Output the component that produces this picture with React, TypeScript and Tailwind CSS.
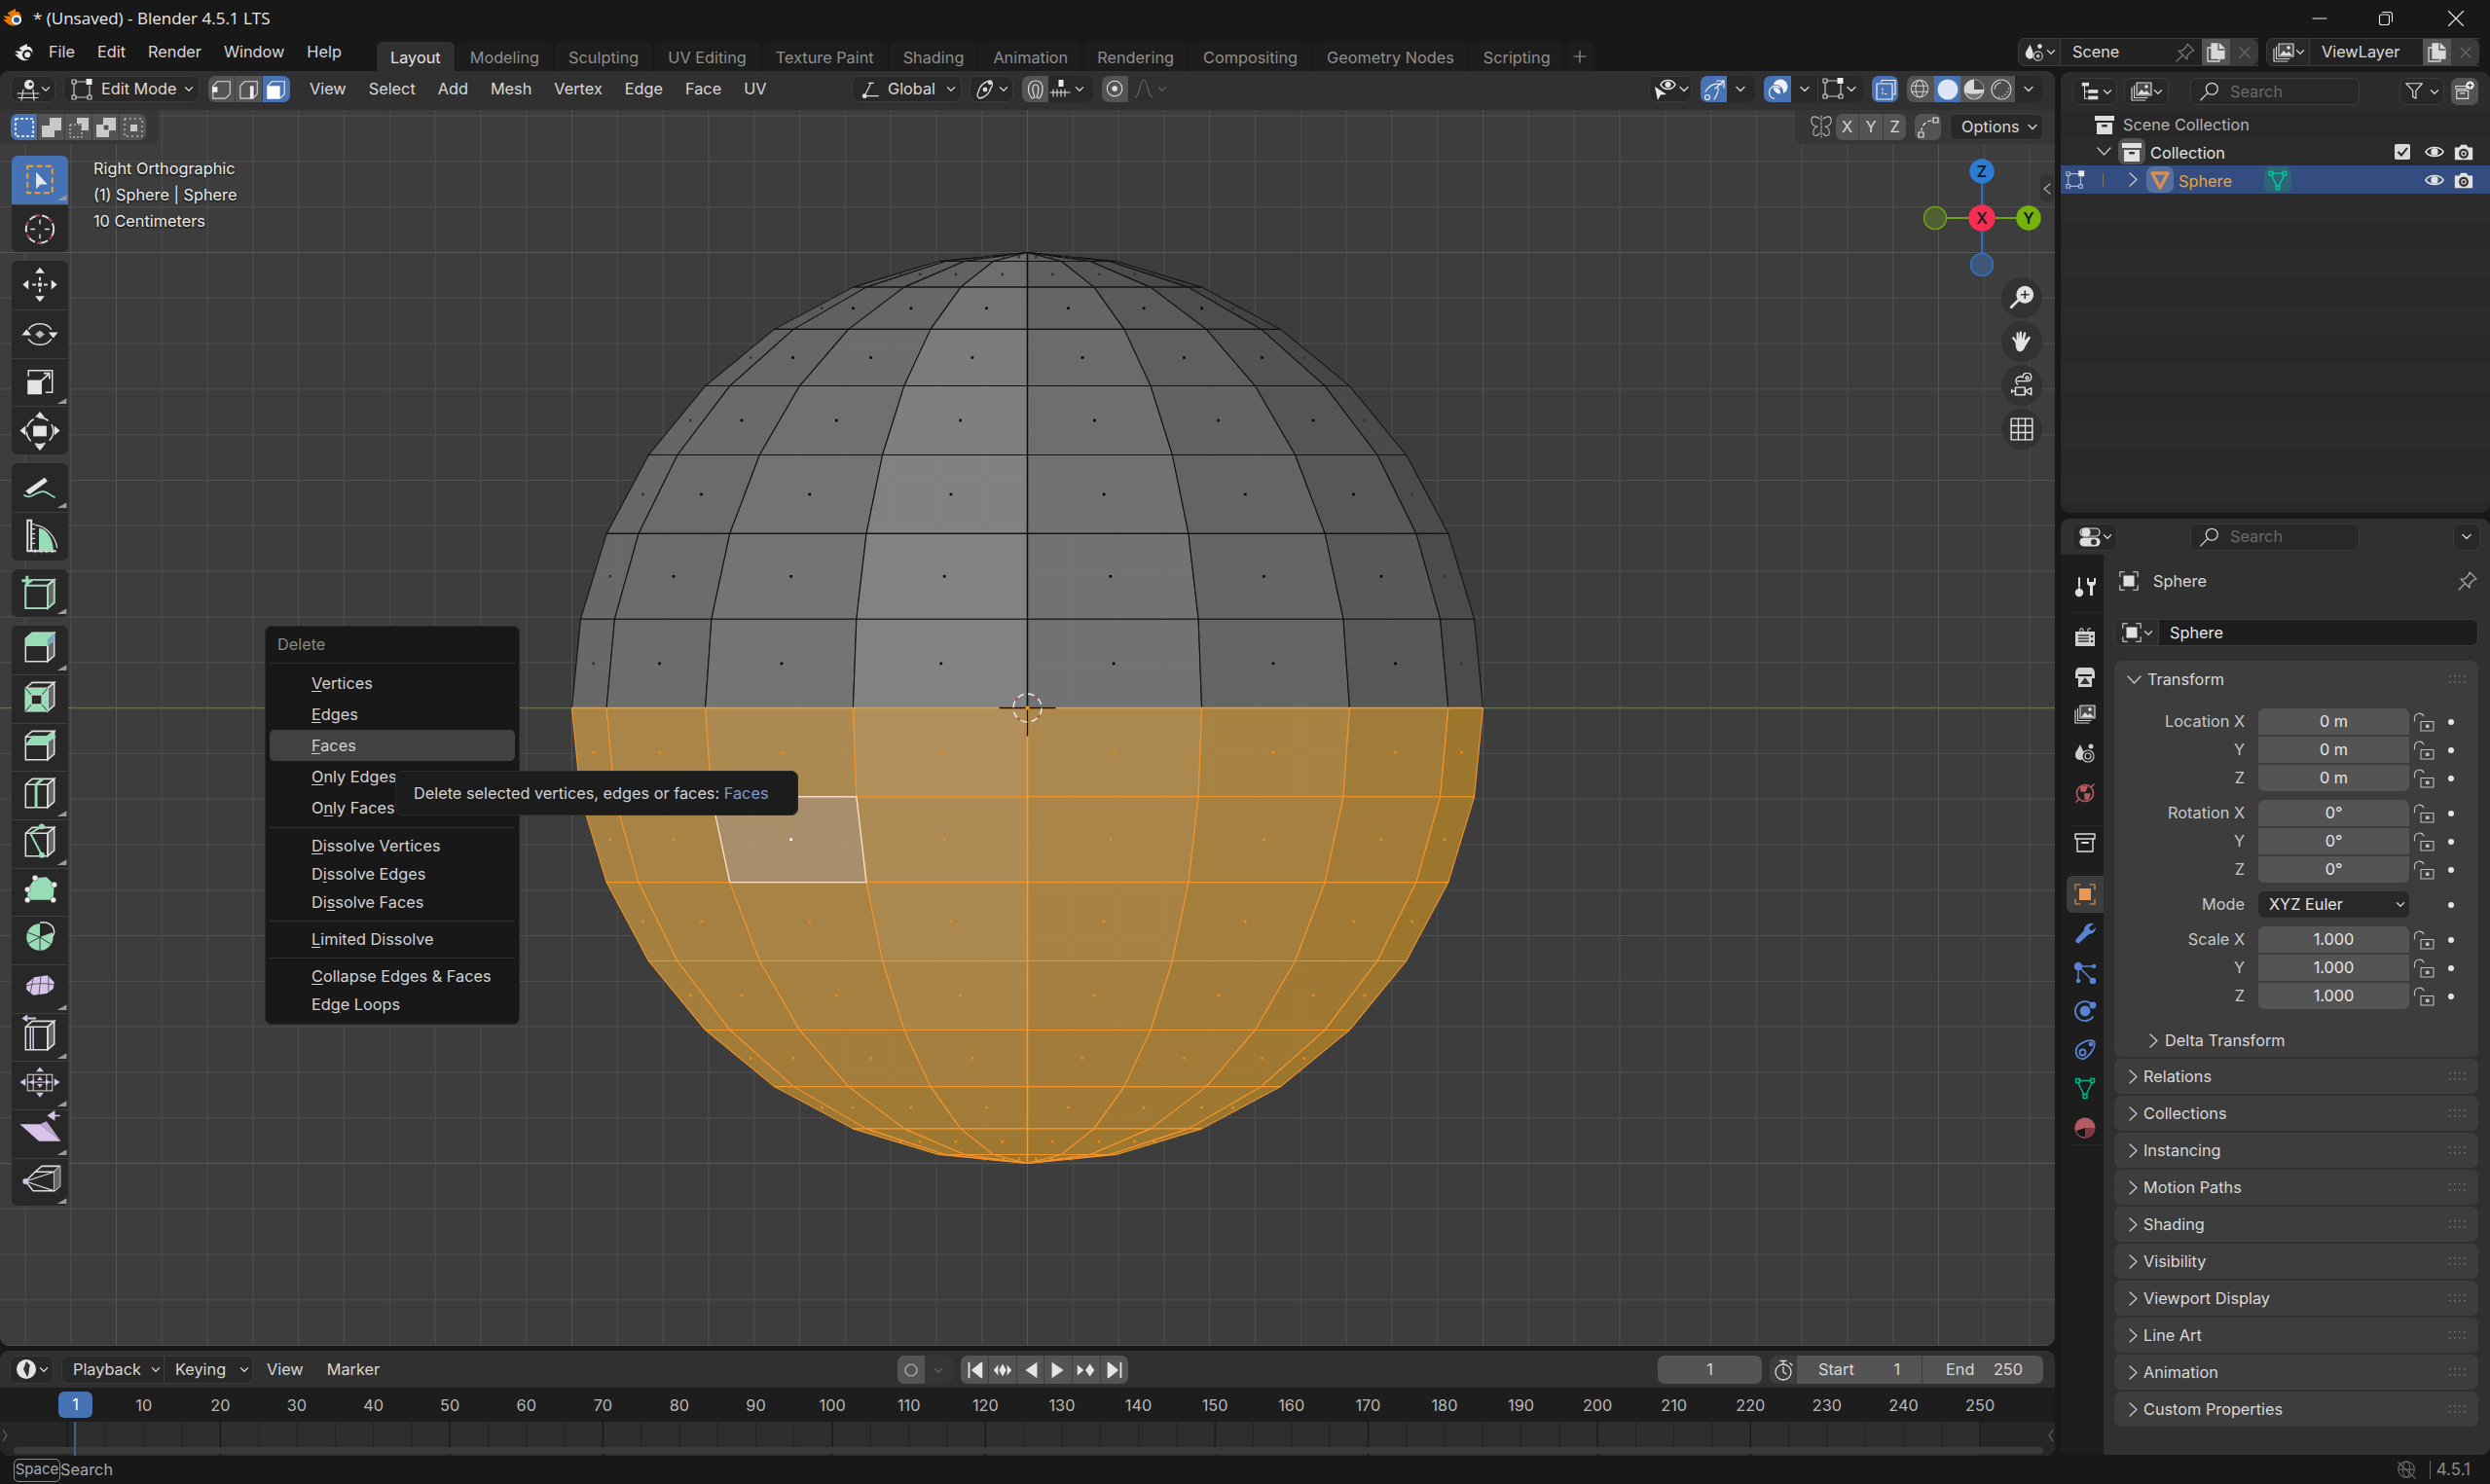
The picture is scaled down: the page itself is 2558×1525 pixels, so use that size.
import React from "react";

const S = ({ w = 24, h = 24, vb = "0 0 24 24", className = "", sw = 1.5, children }: any) => (
  <svg width={w} height={h} viewBox={vb} fill="none" stroke="currentColor" strokeWidth={sw} strokeLinecap="round" strokeLinejoin="round" className={"shrink-0 " + className}>
    {children}
  </svg>
);
const Chev = ({ className = "" }: any) => (
  <S w={10} h={7} vb="0 0 10 7" sw={1.4} className={"text-[#cfcfcf] " + className}><path d="M1 1.5 5 5.5 9 1.5" /></S>
);
const Right = ({ className = "" }: any) => (
  <S w={9} h={15} vb="0 0 9 15" sw={1.3} className={"text-[#c8c8c8] " + className}><path d="M1 1 8 7.5 1 14" /></S>
);
const Down = ({ className = "" }: any) => (
  <S w={15} h={9} vb="0 0 15 9" sw={1.3} className={"text-[#c8c8c8] " + className}><path d="M1 1 7.5 8 14 1" /></S>
);
const XIc = ({ className = "" }: any) => <S w={16} h={16} vb="0 0 16 16" sw={1.4} className={className}><path d="M3 3 13 13M13 3 3 13" /></S>;
const BlenderLogo = ({ s = 24, color = "#e8e8e8", eye = "#e8e8e8", bg = "#181818" }: any) => (
  <svg width={s} height={s} viewBox="0 0 24 24" className="shrink-0">
    <path d="M8 5 14 1.8 14 5 17 5A8 8 0 1 1 6 17.5L1 13 5.5 13 1 9.5 9 9.5 5.5 6.5Z" fill={color} transform="translate(2 2) scale(.9)" />
    <circle cx="15" cy="14" r="4.8" fill={bg} />
    <circle cx="15" cy="14" r="2.8" fill={eye} />
  </svg>
);
const View3D = () => (
  <S className="text-[#dcdcdc]" sw={1.2}><circle cx="13" cy="7" r="5" fill="#e2e2e2" stroke="none" /><circle cx="14.5" cy="6.5" r="1.8" fill="#333" stroke="none" /><path d="M7 12 5 23M17 12 18 23M1 16H23M2 20.5H22" /></S>
);
const EditMode = () => (
  <S className="text-[#c9c9c9]" sw={1.2}>
    <rect x="2" y="2" width="4" height="4" /><rect x="2" y="18" width="4" height="4" /><rect x="18" y="18" width="4" height="4" /><rect x="16.5" y="1" width="6" height="6" fill="#eee" stroke="none" />
    <path d="M4 6V18M6 20H18M20 8V18M6 4H16" />
  </S>
);
const SelModeBase = () => <path d="M2 8 7 3H21V17L16 22H2Z" />;
const Stack = () => (
  <S className="text-[#d4d4d4]" sw={1.2}>
    <path d="M2 8V21H16M4.5 6V18.5H18" /><rect x="7" y="3" width="15" height="13" fill="#4a4a4a" /><path d="M8 15 12 10 15 13 17 11 21 15" fill="#ddd" stroke="none" /><circle cx="17" cy="7" r="1.7" fill="#eee" stroke="none" />
  </S>
);
const Pin = ({ className = "" }: any) => (
  <S className={"text-[#777] " + className} sw={1.2}><path d="M14 3 21 10 18 11 14 15 14 19 5 10 9 10 13 6ZM9 15 3 21" /></S>
);
const Copy = ({ className = "" }: any) => (
  <S className={"text-[#d8d8d8] " + className} sw={1.3}><path d="M7 7H3V21H15V18" /><path d="M7 3H15L20 8V18H7Z" fill="#d8d8d8" stroke="#d8d8d8" /><path d="M14 3V9H20" stroke="#555" /></S>
);
const Search = ({ className = "" }: any) => (
  <S w={22} h={22} className={"text-[#cfcfcf] " + className} sw={1.4}><circle cx="14.5" cy="9" r="6.5" /><path d="M9.5 14 2 21.5" /></S>
);
const Box = ({ className = "", color = "#e0e0e0" }: any) => (
  <S className={className}><path d="M2 3H22V8H2Z" fill={color} stroke="none" /><path d="M4 10H20V22H4Z" fill={color} stroke="none" /><rect x="9" y="12" width="6" height="2.5" rx="1" fill="#333" stroke="none" /></S>
);
const Eye = () => (
  <S className="text-[#e2e2e2]" w={22} h={22} sw={1.6}><path d="M2 12C6 5.5 18 5.5 22 12 18 18.5 6 18.5 2 12Z" /><circle cx="12" cy="12" r="3.2" fill="#e2e2e2" /></S>
);
const Camera = () => (
  <S w={22} h={22} className="text-[#e0e0e0]"><path d="M2 7H7L9 4H15L17 7H22V21H2Z" fill="#e0e0e0" stroke="none" /><circle cx="12" cy="14" r="5.5" fill="#333" stroke="none" /><circle cx="12" cy="14" r="3" fill="#e0e0e0" stroke="none" /><circle cx="12" cy="14" r="1.7" fill="#333" stroke="none" /></S>
);
const Lock = () => (
  <S w={22} h={22} vb="0 0 22 22" sw={1.1} className="text-[#bdbdbd]"><path d="M1.5 10V7A5 5 0 0 1 11 5" /><rect x="8" y="10.5" width="13" height="9.5" /><rect x="13.5" y="14" width="2.5" height="2.5" fill="#bdbdbd" /></S>
);
const Grip = () => (
  <svg width="17" height="8" viewBox="0 0 17 8" className="shrink-0">
    {[0, 5, 10, 15].map((x) => [0, 6].map((y) => <rect key={x + "-" + y} x={x} y={y} width="1.5" height="1.5" fill="#777" />))}
  </svg>
);
const ObjIcon = ({ c = "#e0e0e0", s = 22 }: any) => (
  <S w={s} h={s} className="" sw={1.1}><g stroke={c}><path d="M2 7V2H7M17 2H22V7M22 17V22H17M7 22H2V17" /></g><rect x="6" y="6" width="12" height="12" fill={c} stroke="none" /></S>
);
const MeshTri = ({ s = 22, c = "#00c8a0" }: any) => (
  <S w={s} h={s} sw={1.5}><g stroke={c}><path d="M6 4.5H18M5 7 11 19M19 7 13 19" /><rect x="2.5" y="2.5" width="4" height="4" /><rect x="17.5" y="2.5" width="4" height="4" /><rect x="10" y="18.5" width="4" height="4" /></g></S>
);

const W = "#dcdcdc", G = "#96ddb5", P = "#d8c3ea";
const Cube = () => (
  <g stroke={W} strokeWidth="1.6" fill="none">
    <path d="M37 17 44 11V35L37 41Z" fill="#666" />
    <path d="M14 17H37V41H14ZM14 17 21 11H44L37 17" />
  </g>
);
const Arrow = ({ x, y, a = 0 }: any) => <path d="M-5 0 1 -5V5Z" transform={`translate(${x} ${y}) rotate(${a})`} fill="#e4e4e4" />;
const tools: any[][] = [
  [
    { a: true, t: true, d: <g><rect x="16" y="11" width="26" height="28" fill="none" stroke="#f0a12c" strokeWidth="2" strokeDasharray="6 3.5" /><path d="M25 17V35L29.5 30H37Z" fill="#e6e6e6" /></g> },
    { d: <g><circle cx="29" cy="25" r="14.5" fill="none" stroke="#ddd" strokeWidth="2" strokeDasharray="9 5" /><circle cx="29" cy="25" r="14.5" fill="none" stroke="#b04040" strokeWidth="2" strokeDasharray="5 9" strokeDashoffset="7" /><path d="M29 15V20M29 30V35M19 25H24M34 25H39" stroke="#ddd" strokeWidth="1.5" /></g> },
  ],
  [
    { d: <g><Arrow x={29} y={12} a={90} /><Arrow x={29} y={38} a={-90} /><Arrow x={16} y={25} a={0} /><Arrow x={42} y={25} a={180} /><path d="M21 25H25M33 25H37M29 17V21M29 29V33" stroke="#ddd" strokeWidth="2" /><rect x="27" y="23" width="4" height="4" fill="#ddd" /></g> },
    { d: <g><path d="M17 20C22 12 36 12 41 20M17 30C22 38 36 38 41 30" stroke="#ddd" strokeWidth="1.5" fill="none" /><path d="M24 25 29 21 34 25 29 29Z" fill="#bbb" /><Arrow x={15} y={25} a={90} /><Arrow x={43} y={24} a={-90} /></g> },
    { t: true, d: <g><rect x="16" y="22" width="15" height="15" fill="#e4e4e4" /><path d="M17 18V12H42V35H35" stroke="#ddd" strokeWidth="1.5" fill="none" /><path d="M29 24 38 16M33 15H39V21" stroke="#ddd" strokeWidth="1.7" fill="none" /></g> },
    { d: <g><rect x="22" y="20" width="14" height="11" fill="#e4e4e4" /><circle cx="29" cy="25.5" r="14" stroke="#ddd" strokeWidth="1.5" strokeDasharray="11 5" fill="none" /><Arrow x={29} y={10} a={90} /><Arrow x={29} y={41} a={-90} /><Arrow x={13} y={25} /><Arrow x={45} y={25} a={180} /></g> },
  ],
  [
    { t: true, d: <g><path d="M14 29 34 15 37 19 18 33Z" fill="#e4e4e4" /><path d="M12 33C20 40 26 27 34 30 38 31 40 34 45 36" stroke={G} strokeWidth="1.7" fill="none" /></g> },
    { d: <g><path d="M28 39V16C36 16 43 28 43 39" fill={G} /><path d="M16 8H20V40H16ZM16 40H46" stroke="#ddd" strokeWidth="2" fill="none" /><path d="M20 12H24M20 17H24M20 22H24M20 27H24M20 32H24M24 38V42M30 38V42M36 38V42M42 38V42" stroke="#ddd" strokeWidth="1.2" /><path d="M24 13C36 14 46 26 47 37" stroke="#ddd" strokeWidth="1.3" fill="none" /></g> },
  ],
  [
    { t: true, d: <g><Cube /><path d="M14 17H37V41H14ZM14 17 21 11H44V35L37 41" stroke={G} strokeWidth="1.7" fill="none" /><path d="M10 12H21M15.5 7V17" stroke={G} strokeWidth="3" /></g> },
  ],
  [
    { t: true, d: <g><Cube /><path d="M14 18 21 11H44L37 18V25H14Z" fill={G} /><path d="M37 18V25L44 20V11Z" fill="#7ab" /></g> },
    { d: <g><Cube /><path d="M14 17H37V41H14Z" fill={G} /><rect x="20" y="24" width="11" height="10" fill="#282828" stroke="#ddd" /><path d="M14 17 20 24M37 17 31 24M14 41 20 34M37 41 31 34" stroke="#333" /></g> },
    { d: <g><Cube /><path d="M14 25 21 16H36L41 12 46 17 37 23V26H14Z" fill={G} /></g> },
    { t: true, d: <g><Cube /><path d="M25 17V41M25 17 32 11" stroke={G} strokeWidth="3" /></g> },
    { t: true, d: <g><Cube /><path d="M19 17 31 10M19 17 31 40" stroke={G} strokeWidth="2" /><circle cx="31" cy="10" r="3" fill={G} /><circle cx="31" cy="40" r="3" fill={G} /></g> },
    { d: <g><path d="M16 25 24 13 36 12 44 20 43 36H16Z" fill={G} />{[[16, 25], [24, 13], [44, 20], [43, 36], [16, 36]].map((p, i) => <circle key={i} cx={p[0]} cy={p[1]} r="3" fill="#eee" stroke="#333" strokeWidth=".5" />)}</g> },
    { d: <g><path d="M29 25V11A14 14 0 0 0 29 39 14 14 0 0 0 42 20Z" fill={G} /><path d="M29 25 16 20M29 25 16 32M29 25 29 39M29 25 40 32" stroke="#333" /><path d="M29 10C36 8 44 12 44 20 44 22 42 24 41 25" stroke="#ddd" strokeWidth="1.5" fill="none" /></g> },
    { t: true, d: <g><path d="M15 23 23 16 37 14 44 21 43 28 36 33 22 35 15 29Z" fill={P} /><path d="M15 25C24 22 34 22 44 24M30 15 28 34M22 17 19 32M38 15 38 31" stroke="#555" strokeWidth="1" fill="none" /></g> },
    { t: true, d: <g><Cube /><path d="M19 17V41M22 17V41" stroke={P} strokeWidth="1.6" /><path d="M16 8H25" stroke={P} strokeWidth="2" /><path d="M10 8 16 4V12Z" fill={P} /></g> },
    { t: true, d: <g><rect x="16" y="17" width="26" height="17" stroke="#ddd" fill="none" /><path d="M22 17V34M36 17V34M16 25H42" stroke="#ddd" /><path d="M29 9 25 14H33ZM29 41 25 36H33ZM8 25 14 21V29ZM50 25 44 21V29Z" fill={P} /><path d="M29 19 26 23H32ZM29 31 26 27H32ZM18 25 23 22V28ZM40 25 35 22V28Z" fill={P} /></g> },
    { t: true, d: <g><path d="M8 18H29L51 36H28Z" fill={P} /><path d="M29 18 36 15 51 36" fill="#bca5d0" /><path d="M38 9 44 5V13ZM44 9H50" fill={P} stroke={P} strokeWidth="1.5" /></g> },
    { t: true, d: <g><path d="M24 17 14 27 22 37H44V17ZM24 17 31 11H50V32L44 37M44 17 50 11" stroke="#ddd" strokeWidth="1.6" fill="none" /><path d="M44 17V37L50 32V11Z" fill="#666" /><path d="M14 27 44 17M14 27 44 37" stroke="#ddd" strokeWidth="1.2" /><circle cx="14" cy="27" r="3" fill={P} /></g> },
  ],
];

const D = Math.PI / 180;
const CX = 1055.5, CY = 654.5, R = 468;
const pt = (lat: number, lon: number) => [CX + R * Math.sin(lon * D) * Math.cos(lat * D), CY - R * Math.sin(lat * D)];
const lonV = [106, 111, 119, 134, 117, 103, 89, 76];
const latF = [1, 1, 0.99, 0.97, 0.94, 0.88, 0.84, 0.82];
const mix = (a: number, b: number, t: number) => Math.round(a + (b - a) * t);

function Sphere() {
  const faces: any[] = [];
  for (let i = 7; i >= -8; i--) {
    for (let j = -4; j < 4; j++) {
      const lat0 = i * 11.25, lat1 = (i + 1) * 11.25, lon0 = j * 22.5, lon1 = (j + 1) * 22.5;
      const q = [pt(lat0, lon0), pt(lat0, lon1), pt(lat1, lon1), pt(lat1, lon0)];
      const band = i >= 0 ? i : -i - 1;
      const v = lonV[j + 4] * latF[band];
      const selected = i < 0;
      const active = i === -2 && j === -2;
      let fill = `rgb(${Math.round(v)},${Math.round(v + 1)},${Math.round(v + 2)})`;
      if (selected) {
        const t = Math.max(0, Math.min(1, ((lonV[j + 4] - 76) / 58) * (1 - band / 6.5)));
        fill = `rgb(${mix(164, 184, t)},${mix(122, 149, t)},${mix(46, 94, t)})`;
      }
      if (active) fill = "#b0946f";
      const cxx = q.reduce((s, p) => s + p[0], 0) / 4;
      const cyy = q.reduce((s, p) => s + p[1], 0) / 4;
      faces.push({ key: i + "_" + j, pts: q.map((p) => p.join(",")).join(" "), fill, selected, active, cxx, cyy, j, band });
    }
  }
  const upper = faces.filter((f) => !f.selected);
  const lower = faces.filter((f) => f.selected && !f.active);
  const act = faces.filter((f) => f.active);
  const poly = (f: any) => (
    <polygon key={f.key} points={f.pts} fill={f.fill} fillOpacity={0.94} stroke={f.active ? "#f8dcc6" : f.selected ? "#f3942a" : "#141414"} strokeWidth={f.active ? 1.4 : 1.1} strokeLinejoin="round" />
  );
  const dot = (f: any) => {
    const rim = Math.abs(f.j + 0.5) > 3 || f.band > 5;
    const c = f.active ? "#fff" : f.selected ? "#f08a18" : rim ? "#333" : "#050505";
    return <rect key={"d" + f.key} x={f.cxx - 1.3} y={f.cyy - 1.3} width="2.6" height="2.6" fill={c} />;
  };
  return (
    <g>
      {upper.map(poly)}
      {lower.map(poly)}
      {act.map(poly)}
      {faces.map(dot)}
      <path d={`M${CX} ${CY - R}V${CY}`} stroke="#0c0c0c" strokeWidth="1.4" />
      <path d={`M${CX} ${CY}V${CY + R}`} stroke="#ff9a1e" strokeWidth="1.4" />
      <path d={`M${CX - R} ${CY}H${CX + R}`} stroke="#f59a2c" strokeWidth="1.3" />
      <path d={`M${CX - 29} ${CY}H${CX + 29}M${CX} ${CY - 10}V${CY + 29}`} stroke="#111" strokeWidth="1.3" />
      <circle cx={CX} cy={CY} r="14.5" fill="none" stroke="#f0f0f0" strokeWidth="1.4" strokeDasharray="7 4.4" />
      <circle cx={CX} cy={CY} r="14.5" fill="none" stroke="#d03030" strokeWidth="1.4" strokeDasharray="3 20" strokeDashoffset="-8" />
      <circle cx={CX} cy={CY} r="2" fill="#f59a2c" />
    </g>
  );
}

function ViewportCanvas() {
  const xs: number[] = [], ys: number[] = [];
  for (let k = -23; k <= 23; k++) xs.push(k);
  for (let k = -14; k <= 14; k++) ys.push(k);
  return (
    <svg width="2111" height="1310" viewBox="0 0 2111 1310" className="absolute left-0 top-0">
      {xs.map((k) => <path key={"x" + k} d={`M${CX + k * 46.8} 0V1310`} stroke={k % 10 === 0 ? "#565656" : "#4f4f4f"} strokeWidth="1" />)}
      {ys.map((k) => <path key={"y" + k} d={`M0 ${CY + k * 46.8}H2111`} stroke={k % 10 === 0 ? "#565656" : "#505050"} strokeWidth="1" />)}
      <path d={`M0 ${CY}H2111`} stroke="#587a2c" strokeWidth="1.3" />
      <Sphere />
    </svg>
  );
}

const Dd = ({ className = "", children }: any) => (
  <div className={"flex h-[27px] items-center rounded-[7px] border border-[#3c3c3c] bg-[#282828] " + className}>{children}</div>
);
const TabLabels = ["Modeling", "Sculpting", "UV Editing", "Texture Paint", "Shading", "Animation", "Rendering", "Compositing", "Geometry Nodes", "Scripting"];

function TitleBar() {
  return (
    <div className="flex h-[38px] items-center bg-[#181818] pl-[2px] text-[17px] text-[#e8e8e8] [font-family:'Open_Sans',sans-serif]">
      <svg width="24" height="24" viewBox="0 0 24 24" className="shrink-0">
        <path d="M8 5 14 1.8 14 5 17 5A8 8 0 1 1 6 17.5L1 13 5.5 13 1 9.5 9 9.5 5.5 6.5Z" fill="#ea7600" />
        <circle cx="15" cy="13.5" r="5" fill="#fff" />
        <circle cx="15" cy="13.5" r="3" fill="#265787" />
      </svg>
      <span className="ml-[8px]">* (Unsaved) - Blender 4.5.1 LTS</span>
      <div className="ml-auto flex items-center text-[#e8e8e8]">
        <S w={16} h={16} vb="0 0 16 16" sw={1}><path d="M1 8H15" /></S>
        <S w={16} h={16} vb="0 0 16 16" sw={1.1} className="ml-[52px]"><rect x="1.5" y="4" width="10" height="10.5" rx="2" /><path d="M4.5 1.5H12A2.5 2.5 0 0 1 14.5 4V11" /></S>
        <S w={18} h={18} vb="0 0 18 18" sw={1.1} className="ml-[55px] mr-[26px]"><path d="M1.5 1.5 16.5 16.5M16.5 1.5 1.5 16.5" /></S>
      </div>
    </div>
  );
}

function TopBar() {
  return (
    <div className="flex h-[35px] items-end bg-[#181818] text-[16.3px] text-[#d6d6d6]">
      <div className="flex h-[30px] w-[387px] items-center pb-[9px] pl-[12px]">
        <BlenderLogo s={26} />
        <div className="ml-[12px] flex gap-[23px]">
          {["File", "Edit", "Render", "Window", "Help"].map((m) => <span key={m}>{m}</span>)}
        </div>
      </div>
      <div className="flex h-[30px] gap-[2px]">
        <div className="flex items-center rounded-t-[6px] bg-[#303030] px-[14px] pt-[2px] text-[#e4e4e4]">Layout</div>
        {TabLabels.map((t) => (
          <div key={t} className="flex items-center rounded-t-[6px] bg-[#1d1d1d] px-[14px] pt-[2px] text-[#8f8f8f]">{t}</div>
        ))}
        <div className="flex items-center rounded-t-[6px] bg-[#1d1d1d] px-[7px] text-[#9a9a9a]"><S w={14} h={14} vb="0 0 14 14" sw={1.2}><path d="M7 1V13M1 7H13" /></S></div>
      </div>
      <div className="ml-auto mb-[5px] flex h-[29px] pr-[11px]">
        <div className="flex w-[44px] items-center justify-center rounded-l-[7px] border border-[#3c3c3c] bg-[#282828]">
          <S w={22} h={22} sw={1.1} className="text-[#e0e0e0]"><path d="M7 3C5 8 2 10 2 14A5 5 0 0 0 10 18C12 12 9 8 7 3Z" fill="#e0e0e0" stroke="none" /><circle cx="18" cy="5" r="2.5" fill="#e0e0e0" stroke="none" /><circle cx="16" cy="16" r="5" /><circle cx="16" cy="16" r="2" fill="#bbb" stroke="none" /></S>
          <Chev className="ml-[1px] scale-90" />
        </div>
        <div className="flex w-[203px] items-center border-y border-[#3c3c3c] bg-[#222] pl-[12px] text-[#dcdcdc]">
          <span>Scene</span>
          <Pin className="ml-auto mr-[5px]" />
          <div className="flex h-full w-[29px] items-center justify-center bg-[#545454]"><Copy /></div>
          <div className="flex h-full w-[29px] items-center justify-center rounded-r-[7px] bg-[#3a3a3a] text-[#666]"><XIc /></div>
        </div>
        <div className="ml-[8px] flex w-[45px] items-center justify-center rounded-l-[7px] border border-[#3c3c3c] bg-[#282828]">
          <Stack />
          <Chev className="scale-90" />
        </div>
        <div className="flex w-[174px] items-center border-y border-[#3c3c3c] bg-[#222] pl-[12px] text-[#dcdcdc]">
          <span>ViewLayer</span>
          <div className="ml-auto flex h-full w-[29px] items-center justify-center bg-[#545454]"><Copy /></div>
          <div className="flex h-full w-[29px] items-center justify-center rounded-r-[7px] bg-[#3a3a3a] text-[#666]"><XIc /></div>
        </div>
      </div>
    </div>
  );
}

function Seg({ on, className = "", children }: any) {
  return <div className={(on ? "bg-[#4772b3] " : "bg-[#545454] ") + "flex h-full items-center justify-center " + className}>{children}</div>;
}

function ViewHeader() {
  return (
    <div className="relative flex h-[40px] items-center bg-[#303030] pb-[3px] text-[16.3px] text-[#d8d8d8]">
      <div className="flex w-[875px] items-center pl-[11px]">
        <Dd className="w-[46px] justify-center gap-[1px]"><View3D /><Chev className="scale-90" /></Dd>
        <Dd className="ml-[8px] w-[140px] pl-[6px]"><EditMode /><span className="ml-[8px]">Edit Mode</span><Chev className="ml-auto mr-[5px] scale-90" /></Dd>
        <div className="ml-[9px] flex h-[27px] w-[84px] overflow-hidden rounded-[7px]">
          <Seg className="w-[28px] border-r border-[#3d3d3d]"><S w={22} h={22} sw={1.2} className="text-[#d8d8d8]"><SelModeBase /><rect x="1" y="9" width="6" height="6" fill="#eee" stroke="none" /></S></Seg>
          <Seg className="w-[28px] border-r border-[#3d3d3d]"><S w={22} h={22} sw={1.2} className="text-[#d8d8d8]"><SelModeBase /><rect x="13" y="8" width="4" height="14" fill="#eee" stroke="none" /></S></Seg>
          <Seg on className="w-[28px]"><S w={22} h={22} sw={1.2} className="text-[#eee]"><SelModeBase /><rect x="2" y="8" width="14" height="14" fill="#fff" stroke="none" /></S></Seg>
        </div>
        <div className="ml-[20px] flex gap-[23px]">
          {["View", "Select", "Add", "Mesh", "Vertex", "Edge", "Face", "UV"].map((m) => <span key={m}>{m}</span>)}
        </div>
      </div>
      <Dd className="w-[113px] pl-[8px]">
        <S w={20} h={20} sw={1.4} className="text-[#d8d8d8]"><path d="M5 20 13 4M5 20H22" /><circle cx="5" cy="20" r="2.2" fill="#ddd" /><path d="M10 4H16" /></S>
        <span className="ml-[8px]">Global</span>
        <Chev className="ml-auto mr-[5px] scale-90" />
      </Dd>
      <Dd className="ml-[8px] w-[45px] justify-center gap-[1px]">
        <S sw={1.3} className="text-[#d8d8d8]"><circle cx="11" cy="12" r="1.8" fill="#ddd" /><path d="M17 3A5 5 0 0 1 17 10 14 14 0 0 1 5 21 4 4 0 0 1 4 15 14 14 0 0 1 17 3" /><circle cx="16" cy="5" r="1.5" fill="#ddd" /></S>
        <Chev className="scale-90" />
      </Dd>
      <div className="ml-[9px] flex h-[27px] w-[73px] overflow-hidden rounded-[7px] bg-[#282828]">
        <Seg className="w-[27px]"><S sw={1.2} className="text-[#ddd]"><path d="M8 21C2 13 4 3 12 3 20 3 21 13 16 21L13 20C16 13 15 7 12 7 8 7 8 13 11 20Z" /></S></Seg>
        <S w={24} h={24} sw={1.1} className="mt-[1px] text-[#ddd]"><path d="M2 16H22M5 13V20M9 13V20M13 13V20M17 13V20" /><rect x="10.5" y="3" width="5" height="7" fill="#eee" stroke="none" /></S>
        <Chev className="ml-[3px] mt-[10px] scale-90" />
      </div>
      <div className="ml-[9px] flex h-[27px] w-[73px] overflow-hidden rounded-[7px] bg-[#2f2f2f]">
        <Seg className="w-[27px]"><S w={22} h={22} sw={1.2} className="text-[#ddd]"><circle cx="11" cy="11" r="8.5" /><circle cx="11" cy="11" r="2.5" fill="#ddd" /></S></Seg>
        <S sw={1.1} className="ml-[4px] mt-[1px] text-[#666]"><path d="M3 21C8 21 8 3 12 3 16 3 16 21 21 21" /></S>
        <Chev className="ml-[2px] mt-[10px] scale-90 opacity-30" />
      </div>
      <div className="ml-auto flex items-center pr-[13px]">
        <Dd className="w-[44px] justify-center gap-[3px]">
          <svg width="24" height="24" viewBox="0 0 24 24" className="shrink-0">
            <path d="M8 7C11 1 20 1 23 7 20 13 11 13 8 7Z" fill="none" stroke="#e4e4e4" strokeWidth="1.6" />
            <circle cx="15.5" cy="7" r="3" fill="#e4e4e4" />
            <path d="M2 9 5 23 8 17.5 14 17Z" fill="#e8e8e8" />
          </svg>
          <Chev />
        </Dd>
        <div className="ml-[9px] flex h-[27px] w-[56px] overflow-hidden rounded-[7px] bg-[#282828]">
          <Seg on className="w-[27px]"><S w={24} h={24} sw={1.2} className="text-[#eef2f8]"><path d="M3 14C8 6 14 5 20 7M16 10C17 14 14 19 12 22" /><circle cx="5" cy="20" r="2.500" /><path d="M15 3H22V10M22 3 13 11" /></S></Seg>
          <Chev className="ml-[9px] mt-[10px]" />
        </div>
        <div className="ml-[9px] flex h-[27px] w-[102px] overflow-hidden rounded-[7px] bg-[#282828]">
          <Seg on className="w-[28px]">
            <svg width="24" height="24" viewBox="0 0 24 24"><circle cx="15" cy="9" r="7.500" fill="#eef2f8" /><circle cx="10" cy="15" r="6.500" fill="none" stroke="#4772b3" strokeWidth="3" /><circle cx="10" cy="15" r="6.500" fill="none" stroke="#eef2f8" strokeWidth="1.300" strokeDasharray="24 20" strokeDashoffset="-11" /></svg>
          </Seg>
          <Chev className="ml-[9px] mt-[10px]" />
          <div className="ml-[8px] mt-[1px] flex border-l border-[#3d3d3d] pl-[3px]"><EditMode /></div>
          <Chev className="ml-[2px] mt-[10px]" />
        </div>
        <div className="ml-[9px] flex h-[27px] w-[27px] items-center justify-center rounded-[7px] bg-[#4772b3]">
          <S w={24} h={24} sw={1.2} className="text-[#eef2f8]"><path d="M8 4V2.500H22V17H20" /><rect x="3" y="6" width="16" height="16" /><path d="M9 11V12.500M9 15V16.500M11.500 16.500H13" /></S>
        </div>
        <div className="ml-[9px] flex h-[27px] w-[139px] overflow-hidden rounded-[7px] bg-[#282828]">
          <Seg className="w-[28px]"><S w={22} h={22} sw={1.1} className="text-[#cfcfcf]"><circle cx="11" cy="11" r="9.500" /><ellipse cx="11" cy="11" rx="4.500" ry="9.500" /><path d="M2 8H20M2 14.500H20" /></S></Seg>
          <Seg on className="w-[27px]"><svg width="24" height="24" viewBox="0 0 24 24"><circle cx="12" cy="12" r="10.500" fill="#dce6f4" /></svg></Seg>
          <Seg className="w-[28px]"><svg width="24" height="24" viewBox="0 0 24 24"><circle cx="12" cy="12" r="10" fill="#d8d8d8" stroke="#d8d8d8" /><path d="M12 2A10 10 0 0 1 22 12H12Z" fill="#4a4a4a" /><path d="M3 15C5 19 8 21 12 22 16 21 19 19 21 15 17 17 8 17 3 15Z" fill="#777" /></svg></Seg>
          <Seg className="w-[28px]"><svg width="24" height="24" viewBox="0 0 24 24"><circle cx="12" cy="12" r="10" fill="#4c4c4c" stroke="#cfcfcf" strokeWidth="1.200" /><path d="M12 5A7 7 0 0 0 5 12" fill="none" stroke="#cfcfcf" strokeWidth="1.200" /><path d="M9 20C14 20 19 16 20 10" fill="none" stroke="#bbb" strokeWidth="1.500" strokeDasharray="1.500 2" /></svg></Seg>
          <Chev className="ml-[9px] mt-[10px]" />
        </div>
      </div>
    </div>
  );
}

function ToolSettings() {
  return (
    <div className="relative flex h-[35px] items-start justify-between text-[16.3px] text-[#d8d8d8]">
      <div className="flex h-[35px] w-[163px] rounded-br-[8px] bg-[#363636] pl-[11px] pt-[4px]">
        <div className="flex h-[27px] w-[139px] overflow-hidden rounded-[7px]">
          <Seg on className="w-[28px] border-r border-[#3d3d3d]"><svg width="22" height="22" viewBox="0 0 22 22"><rect x="2" y="2" width="18" height="18" fill="none" stroke="#fff" strokeWidth="1.5" strokeDasharray="3 2" /></svg></Seg>
          <Seg className="w-[28px] border-r border-[#3d3d3d]"><svg width="22" height="22" viewBox="0 0 22 22"><path d="M9 1H21V14H14V21H1V9H9Z" fill="#c8c8c8" /></svg></Seg>
          <Seg className="w-[28px] border-r border-[#3d3d3d]"><svg width="22" height="22" viewBox="0 0 22 22"><path d="M9 1H21V14H14V7H9Z" fill="#c8c8c8" /><rect x="2" y="8" width="12" height="13" fill="none" stroke="#ddd" strokeDasharray="2 2" /></svg></Seg>
          <Seg className="w-[28px] border-r border-[#3d3d3d]"><svg width="22" height="22" viewBox="0 0 22 22"><path d="M8 1H21V14H14V8H8ZM1 8H8V14H14V21H1Z" fill="#c8c8c8" /><rect x="8" y="8" width="6" height="6" fill="none" stroke="#ddd" /></svg></Seg>
          <Seg className="w-[27px]"><svg width="22" height="22" viewBox="0 0 22 22"><rect x="8" y="8" width="7" height="7" fill="#c8c8c8" /><rect x="2" y="2" width="18" height="18" fill="none" stroke="#ddd" strokeDasharray="2 3" /></svg></Seg>
        </div>
      </div>
      <div className="flex h-[35px] w-[267px] items-start rounded-bl-[8px] bg-[#363636] pl-[15px] pt-[4px]">
        <S w={24} h={26} vb="0 0 24 26" sw={1.1} className="text-[#bbb]"><path d="M12 2V24" strokeDasharray="2 1.500" /><path d="M10 5C5 1 1 3 2 8 2 11 5 13 8 13 5 14 3 17 4 21 6 24 9 22 10 20M14 5C19 1 23 3 22 8 22 11 19 13 16 13 19 14 21 17 20 21 18 24 15 22 14 20" /></S>
        <div className="ml-[3px] flex h-[27px] w-[72px] overflow-hidden rounded-[7px]">
          <Seg className="w-[24px] border-r border-[#3d3d3d]">X</Seg>
          <Seg className="w-[25px] border-r border-[#3d3d3d]">Y</Seg>
          <Seg className="w-[23px]">Z</Seg>
        </div>
        <div className="ml-[9px] flex h-[27px] w-[27px] items-center justify-center rounded-[7px] bg-[#545454]">
          <S w={24} h={24} sw={1.2} className="text-[#e4e4e4]"><rect x="17" y="2" width="5" height="5" /><rect x="2" y="17" width="5" height="5" /><path d="M15 5C10 5 5 10 5 15" strokeDasharray="3.500 3" /></S>
        </div>
        <Dd className="ml-[9px] w-[96px] bg-[#232323] pl-[11px]"><span>Options</span><Chev className="ml-auto mr-[5px]" /></Dd>
      </div>
    </div>
  );
}

function Toolbar() {
  return (
    <div className="relative ml-[12px] mt-[12px] flex w-[58px] flex-col gap-[9px]">
      {tools.map((g, i) => (
        <div key={i} className="overflow-hidden rounded-[6px] bg-[#282828]">
          {g.map((t, k) => (
            <div key={k} className={(t.a ? "bg-[#4772b3] " : "") + (k > 0 ? "border-t border-[#3d3d3d] " : "") + "h-[49.7px]"}>
              <svg width="58" height="49" viewBox="0 0 58 50">
                <g transform={i === 4 ? "translate(0 -3.5)" : undefined}>{t.d}</g>
                {t.t && <path d="M57 47H47L57 41Z" fill="#9a9a9a" />}
              </svg>
            </div>
          ))}
        </div>
      ))}
    </div>
  );
}

function Gizmo() {
  const Ball = ({ x, y, r, c, o, t, dim }: any) => (
    <g>
      <circle cx={x} cy={y} r={r} fill={dim ? o : c} stroke={c} strokeWidth="1.5" />
      {t && <text x={x} y={y + 6} textAnchor="middle" fontSize="16" fontWeight="600" fill="#101a28" fontFamily="Inter">{t}</text>}
    </g>
  );
  return (
    <svg width="130" height="130" viewBox="1975 160 130 130" className="absolute left-[1975px] top-[87px]">
      <path d="M2036 188V260" stroke="#2c6fc4" strokeWidth="2" />
      <path d="M2000 224H2072" stroke="#6ea40e" strokeWidth="2" />
      <Ball x={1988} y={224} r={11.5} c="#6ea414" o="#505e33" dim />
      <Ball x={2036} y={272} r={11.5} c="#2e73c8" o="#3e5677" dim />
      <Ball x={2036} y={176} r={12} c="#2e7bd4" t="Z" />
      <Ball x={2084} y={224} r={12} c="#75b30c" t="Y" />
      <Ball x={2036} y={224} r={13} c="#f72d52" t="X" />
    </svg>
  );
}

function NavGizmos() {
  const items = [
    <S key="z" w={26} h={26} sw={1.5} className="text-[#e2e2e2]"><circle cx="15" cy="9" r="7.5" fill="#e2e2e2" /><path d="M15 5.5V12.5M11.5 9H18.5" stroke="#333" /><path d="M9 14 2 21" strokeWidth="2.5" /></S>,
    <svg key="h" width="26" height="26" viewBox="0 0 24 24"><path d="M6 13 3 9C2 8 4 7 5 8L7 11V4C7 3 9 3 9 4V10L10 3C10 2 12 2 12 3V10L14 3.5C14 2.5 16 3 16 4L14.5 11 18 7.5C19 6.5 21 8 20 9L15 17C14 20 12 21.5 10 21.5 7 21.5 6 17 6 13Z" fill="#e2e2e2" /></svg>,
    <S key="c" w={26} h={26} sw={1.3} className="text-[#e2e2e2]"><path d="M8 8H18A4 4 0 1 0 13 4.5 3.5 3.5 0 1 0 8 11" /><circle cx="17" cy="5" r="1.3" /><rect x="6" y="14" width="9" height="7" /><path d="M15 17.5 21 14.5V21Z" /><path d="M2.5 16V19M2.5 17.5H6" /></S>,
    <S key="g" w={26} h={26} sw={1.3} className="text-[#e2e2e2]"><rect x="2" y="2" width="20" height="20" /><path d="M2 8.7H22M2 15.3H22M8.7 2V22M15.3 2V22" /></S>,
  ];
  return (
    <div className="absolute left-[2056px] top-[212px] flex flex-col gap-[3px]">
      {items.map((x, i) => (
        <div key={i} className="flex h-[42px] w-[42px] items-center justify-center rounded-full bg-[#323232]">{x}</div>
      ))}
    </div>
  );
}

const menuGroups: any[][] = [
  [["", "V", "ertices", 32], ["", "E", "dges", 32], ["", "F", "aces", 32, true], ["", "O", "nly Edges & Faces", 32], ["O", "n", "ly Faces", 32]],
  [["", "D", "issolve Vertices", 29], ["D", "i", "ssolve Edges", 29], ["Di", "s", "solve Faces", 29]],
  [["", "L", "imited Dissolve", 29]],
  [["", "C", "ollapse Edges & Faces", 29], ["Ed", "g", "e Loops", 29]],
];

function Popup() {
  return (
    <div className="absolute left-[272px] top-[570px] flex h-[410px] w-[262px] flex-col rounded-[7px] border border-[#2a2a2a] bg-[#181818] px-[4px] text-[16.3px] text-[#d2d2d2]">
      <div className="flex h-[37px] items-center pl-[8px] text-[#8a8a8a]">Delete</div>
      {menuGroups.map((g, i) => (
        <div key={i} className="border-t border-[#2f2f2f] pb-[4px] pt-[4px] first:pt-[3px]">
          {g.map((r: any) => (
            <div key={r[2]} className={(r[4] ? "bg-[#414141] " : "") + "flex items-center rounded-[5px] pl-[43px] " + (r[3] === 32 ? "h-[32px]" : "h-[29px]")}>
              <span className="whitespace-pre">{r[0]}<u className="underline-offset-2">{r[1]}</u>{r[2]}</span>
            </div>
          ))}
        </div>
      ))}
    </div>
  );
}

function Viewport() {
  return (
    <div className="relative h-[1310px] overflow-hidden rounded-[9px] bg-[#3d3d3d]">
      <ViewportCanvas />
      <ViewHeader />
      <ToolSettings />
      <Toolbar />
      <div className="absolute left-[96px] top-[87px] flex flex-col text-[16.3px] leading-[27px] text-[#ececec] [text-shadow:0_1px_2px_#000]">
        <span>Right Orthographic</span>
        <span>(1) Sphere | Sphere</span>
        <span>10 Centimeters</span>
      </div>
      <Gizmo />
      <NavGizmos />
      <div className="absolute right-[1px] top-[107px] flex h-[27px] w-[14px] items-center justify-center rounded-l-[5px] bg-[#333]">
        <S w={8} h={12} vb="0 0 8 12" sw={1.2} className="text-[#aaa]"><path d="M7 1 1 6 7 11" /></S>
      </div>
      <Popup />
      <div className="absolute left-[406px] top-[719px] flex h-[46px] w-[414px] items-center rounded-[7px] border border-[#2b2b2b] bg-[#1c1c1c] pl-[18px] text-[16.3px] text-[#d2d2d2]">
        <span>Delete selected vertices, edges or faces: <span className="text-[#7f9ccb]">Faces</span></span>
      </div>
    </div>
  );
}

const F0 = 77, FS = 7.86;
function Timeline() {
  const labels = [10, 20, 30, 40, 50, 60, 70, 80, 90, 100, 110, 120, 130, 140, 150, 160, 170, 180, 190, 200, 210, 220, 230, 240, 250];
  const ticks: number[] = [];
  for (let f = 0; f <= 270; f += 5) ticks.push(f);
  return (
    <div className="relative mt-[5px] flex h-[108px] flex-col overflow-hidden rounded-[9px] bg-[#2b2b2b] text-[16.3px] text-[#d6d6d6]">
      <div className="relative flex h-[38px] items-center bg-[#303030] pl-[10px]">
        <Dd className="h-[29px] w-[45px] justify-center">
          <svg width="24" height="24" viewBox="0 0 24 24"><circle cx="11" cy="12" r="10" fill="#e4e4e4" /><path d="M11 4 8 12 12 20C15 15 13 12 15 8Z" fill="#333" /></svg>
          <Chev className="scale-90" />
        </Dd>
        <Dd className="ml-[8px] h-[29px] w-[197px]">
          <div className="flex h-full w-[105px] items-center border-r border-[#3c3c3c] pl-[11px]"><span>Playback</span><Chev className="ml-auto mr-[3px] scale-90" /></div>
          <div className="flex h-full flex-1 items-center pl-[11px]"><span>Keying</span><Chev className="ml-auto mr-[3px] scale-90" /></div>
        </Dd>
        <span className="ml-[14px]">View</span>
        <span className="ml-[24px]">Marker</span>
        <div className="absolute left-[922px] top-[5px] flex h-[29px] w-[57px] overflow-hidden rounded-[7px] bg-[#353535]">
          <Seg className="w-[28px]"><S w={18} h={18} sw={1.4} className="text-[#bbb]"><circle cx="12" cy="12" r="8" /></S></Seg>
          <Chev className="ml-[9px] mt-[12px] scale-90 opacity-30" />
        </div>
        <div className="absolute left-[987px] top-[5px] flex h-[29px] w-[172px] overflow-hidden rounded-[7px] bg-[#545454] text-[#e4e4e4]">
          {[
            <path key="a" d="M6 4V20M20 4 10 12 20 20Z" strokeWidth="2" fill="currentColor" />,
            <path key="b" d="M2 12 7 6V18ZM8 12 12 5 16 12 12 19ZM22 12 17 6V18Z" fill="currentColor" stroke="none" />,
            <path key="c" d="M19 3 6 12 19 21Z" fill="currentColor" stroke="none" />,
            <path key="d" d="M5 3 18 12 5 21Z" fill="currentColor" stroke="none" />,
            <path key="e" d="M2 6 9 12 2 18ZM11 12 16 5 21 12 16 19Z" fill="currentColor" stroke="none" />,
            <path key="f" d="M19 4V20M5 4 15 12 5 20Z" strokeWidth="2" fill="currentColor" />,
          ].map((p, i) => (
            <div key={i} className={(i < 5 ? "border-r border-[#3d3d3d] " : "") + "flex h-full flex-1 items-center justify-center"}><S w={22} h={22}>{p}</S></div>
          ))}
        </div>
        <div className="absolute left-[1703px] top-[5px] flex h-[29px] w-[107px] items-center justify-center rounded-[7px] bg-[#545454]">1</div>
        <div className="absolute left-[1818px] top-[5px] flex h-[29px] w-[281px] overflow-hidden rounded-[7px]">
          <div className="flex w-[28px] items-center justify-center bg-[#3d3d3d]"><S w={24} h={24} sw={1.3} className="text-[#ddd]"><circle cx="12" cy="14" r="8" /><path d="M9 2.5H15M12 3V6M12 9V14L15 16M19 5 21 7" /></S></div>
          <div className="flex w-[129px] items-center justify-between border-r border-[#3d3d3d] bg-[#545454] px-[22px]"><span>Start</span><span>1</span></div>
          <div className="flex flex-1 items-center justify-between bg-[#545454] pl-[24px] pr-[21px]"><span>End</span><span>250</span></div>
        </div>
      </div>
      <div className="relative h-[35px] bg-[#1d1d1d]">
        {labels.map((f) => (
          <span key={f} className="absolute top-[6px] -translate-x-1/2 text-[#b8b8b8]" style={{ left: F0 + (f - 1) * FS }}>{f}</span>
        ))}
        <div className="absolute left-[60px] top-[4px] flex h-[27px] w-[35px] items-center justify-center rounded-[6px] bg-[#4772b3] text-white">1</div>
      </div>
      <div className="relative h-[35px] bg-[#2e2e2e]">
        <svg width="2113" height="35" viewBox="0 0 2113 35" className="absolute left-0 top-0">
          <rect x="0" y="0" width={F0} height="35" fill="#262626" />
          <rect x={F0 + 249 * FS} y="0" width="100" height="35" fill="#262626" />
          {ticks.map((f) => (
            <path key={f} d={`M${F0 + (f - 1) * FS} 0V35`} stroke={f % 50 === 20 || f % 50 === 0 ? "#141414" : "#242424"} strokeWidth="1" />
          ))}
          <rect x="14" y="26" width="2085" height="7" rx="3" fill="#3a3a3a" />
          <path d={`M${F0} 0V35`} stroke="#4772b3" strokeWidth="1.5" />
          <path d="M3 20 7 14 3 8" fill="none" stroke="#777" strokeWidth="1" />
          <path d="M2109 8 2105 14 2109 20" fill="none" stroke="#777" strokeWidth="1" />
        </svg>
      </div>
    </div>
  );
}

function Outliner() {
  return (
    <div className="relative mt-[1px] flex h-[453px] flex-col overflow-hidden rounded-[9px] bg-[#282828] text-[16.3px] text-[#d8d8d8]">
      <div className="flex h-[40px] items-center bg-[#2c2c2c] pl-[12px]">
        <Dd className="h-[28px] w-[46px] justify-center gap-[1px] border-[#3c3c3c] bg-[#2a2a2a]">
          <S w={24} h={22} sw={1.1} className="text-[#ddd]"><rect x="3" y="2" width="8" height="4" fill="#ddd" stroke="none" /><rect x="10" y="10" width="11" height="4" fill="#ddd" stroke="none" /><rect x="10" y="17" width="11" height="4" fill="#ddd" stroke="none" /><path d="M6 6V20H9M6 12H9" /></S>
          <Chev className="scale-90" />
        </Dd>
        <Dd className="ml-[7px] h-[28px] w-[46px] justify-center bg-[#2a2a2a]"><Stack /><Chev className="scale-90" /></Dd>
        <Dd className="ml-[22px] h-[28px] w-[174px] bg-[#232323] pl-[8px] text-[#6a6a6a]"><Search /><span className="ml-[10px]">Search</span></Dd>
        <Dd className="ml-[41px] h-[28px] w-[46px] justify-center gap-[4px] bg-[#2a2a2a]"><S w={22} h={22} sw={1.3} className="text-[#ddd]"><path d="M2 3H20L13 11V20L9.5 18V11Z" /></S><Chev className="scale-90" /></Dd>
        <div className="ml-[7px] flex h-[28px] w-[28px] items-center justify-center rounded-[7px] bg-[#545454]">
          <S w={22} h={22} sw={1.2} className="text-[#ddd]"><path d="M2 6H14V9H2ZM3 11H16V20H3ZM7 14H12" /><circle cx="18" cy="5" r="4.5" fill="#eee" stroke="none" /><path d="M18 3V7M16 5H20" stroke="#333" /></S>
        </div>
      </div>
      <div className="flex h-[27px] items-center bg-[#282828] pl-[33px] text-[#b5b5b5]"><Box color="#dcdcdc" /><span className="ml-[7px] mt-[1px]">Scene Collection</span></div>
      <div className="flex h-[29px] items-center bg-[#2b2b2b] pl-[37px] text-[#e4e4e4]">
        <Down className="mr-[7px]" />
        <div className="flex h-[27px] w-[28px] items-center justify-center rounded-[7px] bg-[#545454]"><Box /></div>
        <span className="ml-[5px] mt-[3px]">Collection</span>
        <div className="ml-auto flex items-center pr-[16px]">
          <svg width="16" height="16" viewBox="0 0 16 16"><rect width="16" height="16" rx="2" fill="#d8d8d8" /><path d="M3.5 8 7 11.5 13 4" fill="none" stroke="#222" strokeWidth="2" /></svg>
          <span className="ml-[14px]"><Eye /></span>
          <span className="ml-[8px]"><Camera /></span>
        </div>
      </div>
      <div className="flex h-[29px] items-center bg-[#334d80] pl-[4px] text-[#f0a330]">
        <S w={22} h={22} sw={1.2} className="text-[#a9bad8]"><rect x="2" y="3" width="4" height="4" /><rect x="2" y="17" width="4" height="4" /><rect x="16" y="17" width="4" height="4" /><rect x="15.5" y="1.5" width="6.5" height="6.5" fill="#eee" stroke="none" /><path d="M4 7V17M6 19H16M18 9V17M6 5H15" /></S>
        <div className="ml-[17px] h-[14px] w-px bg-[#7f7556]" />
        <Right className="ml-[26px]" />
        <div className="ml-[9px] flex h-[27px] w-[28px] items-center justify-center rounded-[7px] bg-[#55709f]">
          <svg width="20" height="20" viewBox="0 0 20 20"><path d="M2 3H18L10 18Z" fill="none" stroke="#d98d4e" strokeWidth="3.5" strokeLinejoin="round" /></svg>
        </div>
        <span className="ml-[5px] mt-[3px]">Sphere</span>
        <div className="ml-[33px] flex h-[27px] w-[28px] items-center justify-center rounded-[7px] bg-[#2d6577]"><MeshTri /></div>
        <div className="ml-auto flex items-center pr-[16px]">
          <Eye />
          <span className="ml-[8px]"><Camera /></span>
        </div>
      </div>
      {Array.from({ length: 11 }).map((_, i) => (
        <div key={i} className={(i % 2 === 0 ? "bg-[#2b2b2b]" : "bg-[#282828]") + " h-[29px] shrink-0"} />
      ))}
    </div>
  );
}

const tabIcons: any[] = [
  <S key="t" sw={1.4} className="text-[#ddd]"><path d="M6 3V11" strokeWidth="2" /><circle cx="6" cy="18" r="3.5" fill="#ddd" /><path d="M6 12V15" /><path d="M14 3V8C14 10 16 11 17 11V21H20V11C21 11 23 10 23 8V3L21 3V7H16V3Z" fill="#ddd" stroke="none" /></S>,
  <svg key="r" width="24" height="24" viewBox="0 0 24 24"><path d="M2 7H22V22H2Z" fill="#d0d0d0" /><path d="M7 7V4H10V7M15 7V4H18" stroke="#d0d0d0" fill="none" /><path d="M5 11H16M5 14H16M5 17H16" stroke="#333" strokeWidth="1.5" /><circle cx="19" cy="12" r="1.3" fill="#333" /><circle cx="19" cy="17" r="1.3" fill="#333" /></svg>,
  <svg key="o" width="24" height="24" viewBox="0 0 24 24"><path d="M2 10C2 5 4 3 6 3H18C20 3 22 5 22 10V14H19V10H5V14H2Z" fill="#d0d0d0" /><path d="M5 12H19V23H5Z" fill="#d0d0d0" /><path d="M7 20 12 13 17 20Z" fill="#333" /></svg>,
  <Stack key="v" />,
  <S key="s" sw={1.2} className="text-[#ccc]"><path d="M7 3C5 8 2 10 2 14A5 5 0 0 0 11 17C12 12 9 8 7 3Z" fill="#ccc" stroke="none" /><circle cx="18" cy="5" r="2.5" fill="#ccc" stroke="none" /><circle cx="15" cy="15" r="6" fill="#1d1d1d" /><circle cx="15" cy="15" r="3" /></S>,
  <S key="w" sw={1.6} className="text-[#b85a62]"><circle cx="12" cy="12" r="8.5" /><path d="M8 6 14 5 12 10 8 10ZM12 13 17 13 15 18 12 18Z" fill="#b85a62" /><path d="M3 21 6 18M18 6 21 3" /></S>,
  <S key="c" sw={1.4} className="text-[#ddd]"><rect x="2" y="3" width="20" height="5" /><path d="M4 8V21H20V8" /><path d="M9 12H15" strokeWidth="2" /></S>,
  null,
  <svg key="m" width="24" height="24" viewBox="0 0 24 24"><path d="M21 2 16 6 17 9 20 9 23 6C23 10 20 13 16 13L6 22C3 23 1 20 3 18L11 9C11 5 15 1 21 2Z" fill="#5a83d4" /></svg>,
  <S key="p" sw={1.5} className="text-[#5a83d4]"><circle cx="5" cy="5" r="3.5" fill="#5a83d4" /><circle cx="5" cy="20" r="1.5" fill="#5a83d4" /><circle cx="20" cy="20" r="2.5" fill="#5a83d4" /><circle cx="21" cy="5" r="1.5" fill="#5a83d4" /><path d="M8 5H19M5 9V18M8 8 18 18" /></S>,
  <S key="h" sw={1.8} className="text-[#5a83d4]"><path d="M19 5A10 10 0 1 0 20 18" /><circle cx="12" cy="12" r="4.5" fill="#5a83d4" /><circle cx="20" cy="6" r="2.5" fill="#5a83d4" /></S>,
  <S key="n" sw={1.8} className="text-[#5a83d4]"><path d="M3 12C3 6 16 0 21 3 24 8 17 18 11 21 5 22 2 17 3 12Z" /><circle cx="9.5" cy="14.5" r="3" /><circle cx="18" cy="6" r="1.5" fill="#5a83d4" /></S>,
  <MeshTri key="d" s={24} c="#00b388" />,
  <svg key="l" width="24" height="24" viewBox="0 0 24 24"><circle cx="12" cy="12" r="10.5" fill="#b35a62" /><path d="M12 12V22.5A10.5 10.5 0 0 1 1.5 12Z" fill="#b35a62" /><path d="M12 12V22.5A10.5 10.5 0 0 0 22.5 12Z" fill="#7a3a40" /><path d="M12 12V21.5A9.5 9.5 0 0 1 3 15L12 12Z" fill="#161616" /></svg>,
];
const tabYs = [603, 654, 695, 734, 774, 815, 866, 919, 959, 1000, 1039, 1079, 1118, 1159];

const TfRow = ({ label, val, first, last }: any) => (
  <div className="flex h-[27px] items-center">
    <span className="w-[134px] text-right text-[#c8c8c8]">{label}</span>
    <div className={(first ? "rounded-t-[6px] " : "") + (last ? "rounded-b-[6px] " : "") + "ml-[14px] flex h-full w-[155px] items-center justify-center bg-[#545454] text-[#e6e6e6]"}>{val}</div>
    <span className="ml-[4px]"><Lock /></span>
    <span className="ml-[14px] h-[6px] w-[6px] rounded-full bg-[#e6e6e6]" />
  </div>
);
const TfGroup = ({ rows }: any) => (
  <div className="flex flex-col gap-[2px]">
    {rows.map((r: any, i: number) => <TfRow key={i} label={r[0]} val={r[1]} first={i === 0} last={i === rows.length - 1} />)}
  </div>
);

function Properties() {
  const panels = ["Relations", "Collections", "Instancing", "Motion Paths", "Shading", "Visibility", "Viewport Display", "Line Art", "Animation", "Custom Properties"];
  return (
    <div className="relative mt-[6px] flex h-[962px] flex-col overflow-hidden rounded-[9px] bg-[#303030] text-[16.3px] text-[#d8d8d8]">
      <div className="flex h-[37px] shrink-0 items-center bg-[#303030] pl-[12px]">
        <Dd className="h-[28px] w-[46px] justify-center gap-[1px] bg-[#2a2a2a]">
          <S sw={1.2} className="text-[#ddd]"><rect x="2" y="3" width="20" height="8" rx="4" fill="#333" /><circle cx="8" cy="7" r="4" fill="#ddd" /><rect x="2" y="13" width="20" height="8" rx="4" fill="#ddd" /><circle cx="16" cy="17" r="3" fill="#333" stroke="none" /></S>
          <Chev className="scale-90" />
        </Dd>
        <Dd className="ml-[75px] h-[28px] w-[174px] bg-[#232323] pl-[8px] text-[#6a6a6a]"><Search /><span className="ml-[10px]">Search</span></Dd>
        <Dd className="ml-auto mr-[10px] h-[28px] w-[28px] justify-center bg-[#2a2a2a]"><Chev /></Dd>
      </div>
      <div className="flex flex-1">
        <div className="relative w-[44px] shrink-0 bg-[#1d1d1d]">
          <div className="absolute left-[6px] top-[330px] h-[38px] w-[38px] rounded-l-[6px] bg-[#3d3d3d]" />
          {tabIcons.map((el, i) => (
            <div key={i} className="absolute left-[3px] flex w-[44px] justify-center" style={{ top: tabYs[i] - 570 - 12 }}>{el || <ObjIcon c="#e89a55" s={24} />}</div>
          ))}
          {[59, 278, 328, 606].map((y) => <div key={y} className="absolute left-[8px] h-px w-[36px] bg-[#262626]" style={{ top: y }} />)}
        </div>
        <div className="flex flex-1 flex-col pl-[11px] pr-[12px]">
          <div className="flex h-[66px] items-center pb-[12px] pl-[4px] text-[#d8d8d8]">
            <ObjIcon />
            <span className="ml-[14px]">Sphere</span>
            <Pin className="ml-auto mr-[-1px] text-[#aaa]" />
          </div>
          <div className="flex h-[28px] overflow-hidden rounded-[7px] border border-[#3c3c3c] bg-[#1d1d1d]">
            <div className="flex w-[45px] items-center justify-center gap-[1px] border-r border-[#3c3c3c] bg-[#2c2c2c]"><ObjIcon /><Chev className="scale-90" /></div>
            <span className="ml-[11px] self-center text-[#e6e6e6]">Sphere</span>
          </div>
          <div className="mt-[15px] flex h-[407px] shrink-0 flex-col rounded-[7px] bg-[#3d3d3d]">
            <div className="flex h-[38px] items-center pl-[13px] pr-[13px]">
              <Down />
              <span className="ml-[6px]">Transform</span>
              <span className="ml-auto"><Grip /></span>
            </div>
            <div className="mt-[11px] flex flex-col gap-[9px]">
              <TfGroup rows={[["Location X", "0 m"], ["Y", "0 m"], ["Z", "0 m"]]} />
              <TfGroup rows={[["Rotation X", "0°"], ["Y", "0°"], ["Z", "0°"]]} />
              <div className="flex h-[27px] items-center">
                <span className="w-[134px] text-right text-[#c8c8c8]">Mode</span>
                <div className="ml-[14px] flex h-full w-[155px] items-center rounded-[6px] bg-[#282828] pl-[11px] text-[#e6e6e6]"><span>XYZ Euler</span><Chev className="ml-auto mr-[4px] scale-90" /></div>
                <span className="ml-[40px] h-[6px] w-[6px] rounded-full bg-[#e6e6e6]" />
              </div>
              <TfGroup rows={[["Scale X", "1.000"], ["Y", "1.000"], ["Z", "1.000"]]} />
            </div>
            <div className="mt-[19px] flex h-[26px] items-center pl-[36px]">
              <Right />
              <span className="ml-[7px]">Delta Transform</span>
            </div>
          </div>
          <div className="mt-[2px] flex flex-col gap-[2px]">
            {panels.map((p) => (
              <div key={p} className="flex h-[36px] items-center rounded-[7px] bg-[#3d3d3d] pl-[15px] pr-[13px]">
                <Right />
                <span className="ml-[6px]">{p}</span>
                <span className="ml-auto"><Grip /></span>
              </div>
            ))}
          </div>
        </div>
      </div>
    </div>
  );
}

function StatusBar() {
  return (
    <div className="flex h-[29px] items-center bg-[#181818] pl-[14px] pr-[20px] text-[15px] text-[#9c9c9c]">
      <div className="flex h-[24px] w-[48px] items-center justify-center rounded-[5px] border border-[#8a8a8a] text-[#aaa]">Space</div>
      <span className="text-[16.3px] text-[#a8a8a8]">Search</span>
      <div className="ml-auto flex items-center">
        <S w={22} h={22} sw={1.2} className="text-[#666]"><circle cx="11" cy="11" r="9" /><ellipse cx="11" cy="11" rx="4" ry="9" /><path d="M2 11H20M2 3 21 21" /></S>
        <div className="ml-[12px] h-[19px] w-px bg-[#666]" />
        <span className="ml-[6px] text-[17px] text-[#8a8a8a]">4.5.1</span>
      </div>
    </div>
  );
}

export default function App() {
  return (
    <div className="h-[1525px] w-[2558px] overflow-hidden bg-[#181818] [font-family:Inter,sans-serif]">
      <TitleBar />
      <TopBar />
      <div className="flex h-[1423px]">
        <div className="w-[2111px] shrink-0">
          <Viewport />
          <Timeline />
        </div>
        <div className="ml-[6px] flex-1">
          <Outliner />
          <Properties />
        </div>
      </div>
      <StatusBar />
    </div>
  );
}
